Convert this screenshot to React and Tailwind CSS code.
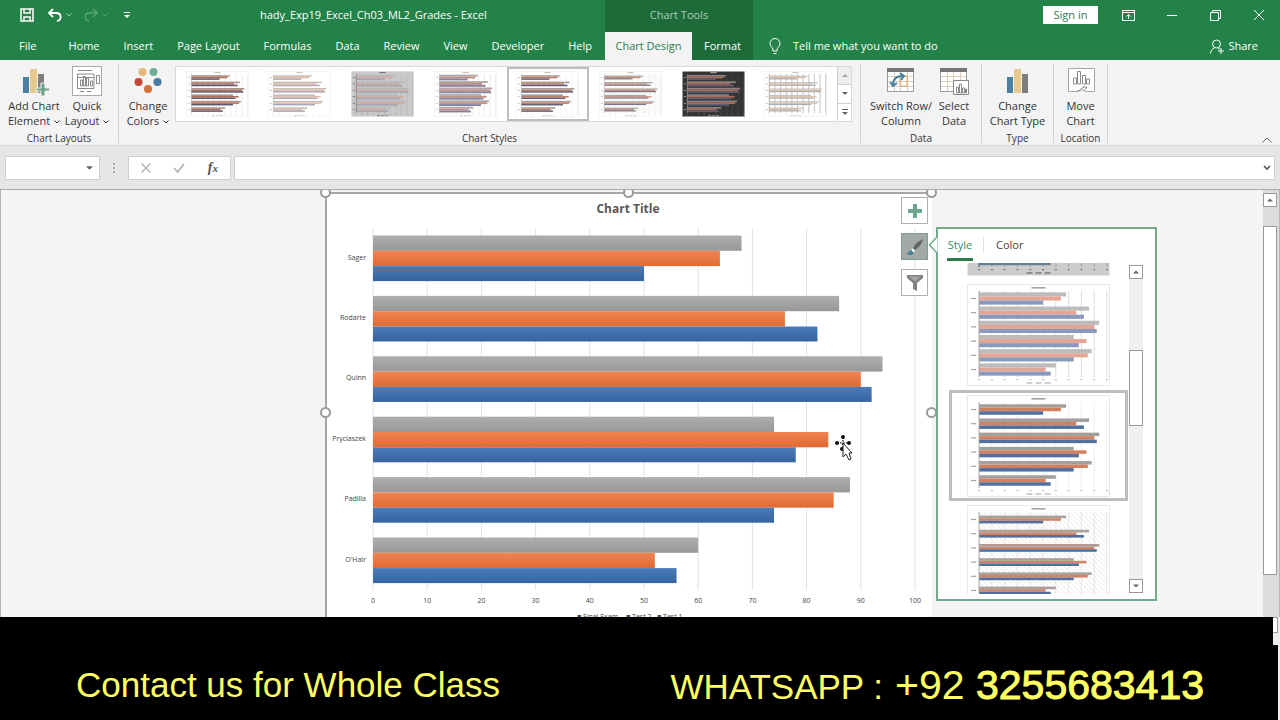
import React from "react";

const students = [
  { name: "Sager", gray: 68, orange: 64, blue: 50 },
  { name: "Rodarte", gray: 86, orange: 76, blue: 82 },
  { name: "Quinn", gray: 94, orange: 90, blue: 92 },
  { name: "Pryciaszek", gray: 74, orange: 84, blue: 78 },
  { name: "Padilla", gray: 88, orange: 85, blue: 74 },
  { name: "O'Hair", gray: 60, orange: 52, blue: 56 },
];

const ticks = [0, 10, 20, 30, 40, 50, 60, 70, 80, 90, 100];

const tabs = ["Home", "Insert", "Page Layout", "Formulas", "Data", "Review", "View", "Developer", "Help"];

const galleryStyles = [
  { id: 1, bar: 3.4, colors: ["#a98f86", "#b5705a", "#5f5a72"], grid: "#c9c9c9" },
  { id: 2, bar: 3.4, colors: ["#c5bcb6", "#e3bda4", "#a9a9b8"], grid: "none" },
  { id: 3, bar: 3.8, colors: ["#b9b9b9", "#d3aa9e", "#a3a8b3"], grid: "#a5a5a5", bg: "#c9c9c9", axis: "#444" },
  { id: 4, bar: 4.2, colors: ["#b0a8a8", "#c58f83", "#7f83a0"], grid: "#c4c4c4" },
  { id: 5, bar: 3.4, colors: ["#a39a98", "#c67b62", "#5d617d"], grid: "#dedede" },
  { id: 6, bar: 2.8, colors: ["#a8a3a1", "#cd8b74", "#75778c"], grid: "#dcdcdc", hatch: true },
  { id: 7, bar: 3.8, colors: ["#8d8585", "#b06a55", "#5c6079"], grid: "#5a5a5a", bg: "#333333", axis: "#ddd" },
  { id: 8, bar: 2.8, colors: ["#c9c4bd", "#e5bfa0", "#a6adb5"], grid: "#b5b5b5", dense: true },
];

// Small preview of the bar chart, used in the ribbon gallery and in the style pane
function MiniChart({ look, className }) {
  const hatchId = "hatch-" + look.id;
  const ink = look.axis || "#a3a3a3";
  return (
    <svg viewBox="0 0 142 102" preserveAspectRatio="none" className={className} aria-hidden="true">
      <defs>
        <pattern id={hatchId} width="5" height="5" patternUnits="userSpaceOnUse">
          <path d="M0 0L5 5" stroke="#dadada" strokeWidth="0.6" />
        </pattern>
      </defs>
      <rect x="0.5" y="0.5" width="141" height="101" fill={look.bg || "#ffffff"} stroke="#e8e8e8" />
      {look.hatch && <rect x="12" y="7" width="127" height="86" fill={`url(#${hatchId})`} />}
      <rect x="64" y="3" width="14" height="1.6" fill={ink} />
      {ticks.map((t) => (
        <g key={t}>
          <path d={`M${12 + t * 1.27} 7V93`} stroke={look.grid} strokeWidth="0.8" />
          <rect x={11 + t * 1.27} y="95" width="2" height="1.2" fill={ink} opacity="0.7" />
        </g>
      ))}
      {students.map((s, i) => {
        const top = 14.5 + i * 14.2 - look.bar * 1.5;
        return (
          <g key={s.name}>
            <rect x="4" y={top + look.bar * 1.5 - 0.6} width="5" height="1.2" fill={ink} />
            <rect x="12" y={top} width={s.gray * 1.27} height={look.bar} fill={look.colors[0]} />
            <rect x="12" y={top + look.bar} width={s.orange * 1.27} height={look.bar} fill={look.colors[1]} />
            <rect x="12" y={top + look.bar * 2} width={s.blue * 1.27} height={look.bar} fill={look.colors[2]} />
          </g>
        );
      })}
      {look.dense &&
        ticks.map((t) => <path key={t} d={`M${12 + t * 1.27} 7V93`} stroke={look.grid} strokeWidth="1.2" />)}
      <path d="M12 7V93" stroke={ink} strokeWidth="0.8" />
      <path d="M59 99H85" stroke={ink} strokeWidth="1.2" strokeDasharray="6 3" />
    </svg>
  );
}

function GradesChart() {
  return (
    <svg viewBox="0 0 605 440" className="block h-[440px] w-[605px] bg-white" fontFamily="'Open Sans', sans-serif">
      <defs>
        <linearGradient id="gray" x2="0" y2="1">
          <stop stopColor="#aeaeae" />
          <stop offset="1" stopColor="#989898" />
        </linearGradient>
        <linearGradient id="orange" x2="0" y2="1">
          <stop stopColor="#f08456" />
          <stop offset="1" stopColor="#e06a30" />
        </linearGradient>
        <linearGradient id="blue" x2="0" y2="1">
          <stop stopColor="#4b7cb9" />
          <stop offset="1" stopColor="#35639f" />
        </linearGradient>
      </defs>
      <text x="301" y="19" textAnchor="middle" fontSize="12" fontWeight="700" fill="#595959">Chart Title</text>
      {ticks.map((t) => (
        <g key={t}>
          <path d={`M${46 + t * 5.42} 34V396`} stroke="#e3e3e3" />
          <text x={46 + t * 5.42} y="409" textAnchor="middle" fontSize="7" fill="#444">{t}</text>
        </g>
      ))}
      {students.map((s, i) => {
        const top = 41.5 + i * 60.4;
        return (
          <g key={s.name}>
            <text x="39" y={top + 24} textAnchor="end" fontSize="7" fill="#444">{s.name}</text>
            <rect x="46" y={top} width={s.gray * 5.42} height="15.3" fill="url(#gray)" />
            <rect x="46" y={top + 15.3} width={s.orange * 5.42} height="15.3" fill="url(#orange)" />
            <rect x="46" y={top + 30.6} width={s.blue * 5.42} height="15" fill="url(#blue)" />
          </g>
        );
      })}
      <g fontSize="7" fill="#444">
        <text x="250" y="425">■ Final Exam</text>
        <text x="299" y="425">■ Test 2</text>
        <text x="330" y="425">■ Test 1</text>
      </g>
    </svg>
  );
}

function BarsIcon({ plus }) {
  return (
    <svg viewBox="0 0 30 30" className="h-[30px] w-[30px]" aria-hidden="true">
      <path d="M4 11h6v16H4z" fill="#4a7f9f" />
      <path d="M11 3h7v24h-7z" fill="#e6ca8c" />
      <path d="M19 8h6v19h-6z" fill="#7d7d7d" />
      {plus && <path d="M22 17h4v5h5v3h-5v5h-4v-5h-5v-3h5z" fill="#6aa58b" stroke="#f3f3f3" />}
    </svg>
  );
}

function QuickLayoutIcon() {
  return (
    <svg viewBox="0 0 30 30" className="h-[30px] w-[30px]" fill="none" stroke="#8a8a8a" aria-hidden="true">
      <rect x="0.5" y="0.5" width="29" height="29" fill="#fff" stroke="#a9a9a9" />
      <path d="M6 4.500h14M5.500 8v14.500H22V8zM24.500 9.500h3v8h-3z" />
      <path d="M8.500 20v-6h2v6zM11.500 20V10.500h2V20zM14.500 20v-8h2v8zM18.500 20v-5h2v5zM6 11.500h16M8 25.500h4M15 25.500h4" />
    </svg>
  );
}

function ColorsIcon() {
  return (
    <svg viewBox="0 0 30 30" className="h-[30px] w-[30px]" aria-hidden="true">
      <circle cx="9.500" cy="6" r="4" fill="#e3b77d" />
      <circle cx="20.500" cy="6" r="4" fill="#6fae92" />
      <circle cx="5.500" cy="16" r="4" fill="#c4473a" />
      <circle cx="24.500" cy="16" r="4" fill="#487aa5" />
      <circle cx="15" cy="23" r="4" fill="#d3703a" />
    </svg>
  );
}

function TableIcon({ chart }) {
  return (
    <svg viewBox="0 0 30 30" className="h-[30px] w-[30px]" fill="none" aria-hidden="true">
      <path d="M1.500 3.500h26v22h-26z" fill="#fff" stroke="#9a9a9a" />
      <path d="M1 2h27v4H1z" fill="#757575" />
      <path d="M2 10.500h25M2 15.500h25M2 20.500h25M8.500 6v19M14.500 6v19M21.500 6v19" stroke="#dccdb8" />
      {chart ? (
        <g stroke="#8a8a8a">
          <path d="M14.500 14.500h15v14h-15z" fill="#fff" />
          <path d="M17.500 27v-6h2v6zM20.500 27v-9h2v9zM23.500 27v-5h2v5zM26.500 27v-4h1v4z" />
        </g>
      ) : (
        <g>
          <path d="M14 10h7v10h-7z" stroke="#e2a25c" />
          <path d="M7 19c0-6 3-9 10-9M4 16l3 4 4-3M14 7l4 3-3 4" stroke="#3f7fa5" strokeWidth="1.800" />
        </g>
      )}
    </svg>
  );
}

function MoveChartIcon() {
  return (
    <svg viewBox="0 0 30 30" className="h-[30px] w-[30px]" fill="#fff" stroke="#8a8a8a" aria-hidden="true">
      <path d="M2.500 2.500h26v23h-9l-3-2-5 2h-9z" stroke="#a5a5a5" />
      <path d="M7.500 18v-6h3v6zM11.500 18V5.500h3V18zM16.500 18V9.500h3V18zM20.500 18v-5h3v5z" />
      <path d="M11 25c3 0 4-3 7-4M17 21h4l-3 4" fill="none" />
    </svg>
  );
}

function Chevron() {
  return (
    <svg viewBox="0 0 6 4" className="ml-1 inline-block h-1 w-1.5" fill="none" stroke="currentColor" aria-hidden="true">
      <path d="M0.500 0.500L3 3L5.500 0.500" />
    </svg>
  );
}

function Arrow({ up, className }) {
  return (
    <svg viewBox="0 0 8 4" className={className || "h-1 w-2"} fill="#666" aria-hidden="true">
      {up ? <path d="M0 4h8L4 0z" /> : <path d="M0 0h8L4 4z" />}
    </svg>
  );
}

function RibbonButton({ icon, lines, menu, className }) {
  return (
    <button className={"flex flex-col items-center text-[11px] leading-[15px] text-[#333] " + className}>
      {icon}
      <span className="mt-0.5 whitespace-nowrap">
        {lines[0]}
        <br />
        {lines[1]}
        {menu && <Chevron />}
      </span>
    </button>
  );
}

function RibbonGroup({ label, className, children }) {
  return (
    <section className={"mb-0.5 mt-1 flex flex-col justify-between border-r border-[#cfcfcf] pt-0.5 " + className}>
      <div className="flex">{children}</div>
      <h2 className="text-center text-[10px] leading-[10px] text-[#333]">{label}</h2>
    </section>
  );
}

function Header() {
  return (
    <header className="flex h-[60px] bg-[#238247] text-[11px] text-white">
      <div className="flex w-[605px] shrink-0 flex-col">
        <div className="flex h-[30px] items-center">
          <div className="flex w-[240px] items-center pl-5">
            <button aria-label="Save">
              <svg viewBox="0 0 14 14" className="h-3.5 w-3.5" fill="none" stroke="white" strokeWidth="1.500">
                <path d="M1 1h12v12H1zM4 1v4h6V1M4 13V9h6v4" />
              </svg>
            </button>
            <button aria-label="Undo" className="ml-3.5">
              <svg viewBox="0 0 14 14" className="h-3.5 w-3.5" fill="none" stroke="white" strokeWidth="1.800">
                <path d="M5 1L1 5l4 4M1 5h7c6 0 6 7 1 8" />
              </svg>
            </button>
            <span className="flex opacity-60">
              <Chevron />
            </span>
            <button aria-label="Redo" className="ml-3 flex items-center opacity-25">
              <svg viewBox="0 0 14 14" className="h-3.5 w-3.5" fill="none" stroke="white" strokeWidth="1.600">
                <path d="M9 1l4 4-4 4M13 5H6c-6 0-6 7-1 8" />
              </svg>
              <Chevron />
            </button>
            <button aria-label="Customize toolbar" className="ml-4">
              <svg viewBox="0 0 6 6" className="h-1.5 w-1.5" fill="white">
                <path d="M0 0h6v1H0zM0 3h6L3 6z" />
              </svg>
            </button>
          </div>
          <h1 className="ml-5 whitespace-pre">hady_Exp19_Excel_Ch03_ML2_Grades - Excel</h1>
        </div>
        <nav className="flex h-[30px] items-center gap-6 whitespace-nowrap pl-[19px] pt-0.5">
          <button className="mr-2">File</button>
          {tabs.map((tab) => (
            <button key={tab}>{tab}</button>
          ))}
        </nav>
      </div>
      <div className="flex w-[148px] shrink-0 flex-col bg-[#1e6b3a]">
        <div className="flex h-8 items-center justify-center pb-0.5 text-[#a9cdb5]">Chart Tools</div>
        <div className="flex h-7">
          <button className="w-[87px] bg-[#f3f3f3] text-[#2d7a4b]">Chart Design</button>
          <button className="flex-1">Format</button>
        </div>
      </div>
      <div className="flex flex-1 flex-col">
        <div className="flex h-[30px] items-center justify-end pr-4">
          <button className="h-[18px] w-[55px] bg-white leading-[18px] text-[#2d7a4b]">Sign in</button>
          <button aria-label="Ribbon display options" className="ml-6">
            <svg viewBox="0 0 13 11" className="h-[11px] w-[13px]" fill="none" stroke="white">
              <path d="M0.500 0.500h12v10H0.500zM0 2.500h13M6.500 9V4.500M4.500 6.500l2-2 2 2" />
            </svg>
          </button>
          <button aria-label="Minimize" className="ml-8">
            <svg viewBox="0 0 10 10" className="h-2.5 w-2.5" stroke="white">
              <path d="M0 5.500h10" />
            </svg>
          </button>
          <button aria-label="Restore" className="ml-[33px]">
            <svg viewBox="0 0 11 11" className="h-[11px] w-[11px]" fill="none" stroke="white">
              <path d="M0.500 2.500h8v8h-8zM2.500 2.500v-2h8v8h-2" />
            </svg>
          </button>
          <button aria-label="Close" className="ml-[33px]">
            <svg viewBox="0 0 10 10" className="h-2.5 w-2.5" stroke="white">
              <path d="M0 0l10 10M10 0L0 10" />
            </svg>
          </button>
        </div>
        <div className="flex h-[30px] items-center pl-4 pr-[22px] pt-0.5">
          <svg viewBox="0 0 12 17" className="h-[17px] w-3" fill="none" stroke="white" aria-hidden="true">
            <path d="M4 13v-2C3 9 1 8 1 5.500a5 5 0 0110 0C11 8 9 9 8 11v2zM4.500 15.500h3" />
          </svg>
          <button className="ml-3">Tell me what you want to do</button>
          <button className="ml-auto flex items-center gap-1">
            <svg viewBox="0 0 14 15" className="h-[15px] w-3.5" fill="none" stroke="white" aria-hidden="true">
              <circle cx="6.500" cy="5" r="4" />
              <path d="M0.500 14.500c0-3 2-5 4-5.500M8 9l2 1.500M11 9v6M8 12h6" />
            </svg>
            Share
          </button>
        </div>
      </div>
    </header>
  );
}

function Ribbon() {
  return (
    <div className="flex h-[86px] border-b border-[#d6d6d6] bg-[#f3f3f3]">
      <RibbonGroup label="Chart Layouts" className="w-[119px]">
        <RibbonButton icon={<BarsIcon plus />} lines={["Add Chart", "Element"]} menu className="w-[68px]" />
        <RibbonButton icon={<QuickLayoutIcon />} lines={["Quick", "Layout"]} menu className="w-[38px]" />
      </RibbonGroup>
      <RibbonGroup label="Chart Styles" className="w-[742px]">
        <RibbonButton icon={<ColorsIcon />} lines={["Change", "Colors"]} menu className="ml-0.5 w-[54px]" />
        <div className="flex h-[56px] w-[677px] border border-[#d9d9d9] bg-white">
          <div className="grid flex-1 grid-cols-8">
            {galleryStyles.map((look) => (
              <button
                key={look.id}
                aria-label={"Style " + look.id}
                className={
                  "flex items-center justify-center border-2 " + (look.id === 5 ? "border-[#bdbdbd]" : "border-transparent")
                }
              >
                <MiniChart look={look} className="h-[46px] w-[63px]" />
              </button>
            ))}
          </div>
          <div className="flex w-[14px] flex-col border-l border-[#d0d0d0]">
            <button aria-label="Scroll up" className="flex flex-1 items-center justify-center bg-[#e2e2e2] opacity-60">
              <Arrow up className="h-[3px] w-1.5" />
            </button>
            <button aria-label="Scroll down" className="flex flex-1 items-center justify-center border-y border-[#d0d0d0]">
              <Arrow className="h-[3px] w-1.5" />
            </button>
            <button aria-label="More styles" className="flex flex-1 flex-col items-center justify-center gap-0.5">
              <span className="h-px w-1.5 bg-[#666]" />
              <Arrow className="h-[3px] w-1.5" />
            </button>
          </div>
        </div>
      </RibbonGroup>
      <RibbonGroup label="Data" className="w-[121px]">
        <RibbonButton icon={<TableIcon />} lines={["Switch Row/", "Column"]} className="ml-1.5 w-[68px]" />
        <RibbonButton icon={<TableIcon chart />} lines={["Select", "Data"]} className="w-[38px]" />
      </RibbonGroup>
      <RibbonGroup label="Type" className="w-[72px]">
        <RibbonButton icon={<BarsIcon />} lines={["Change", "Chart Type"]} className="w-full" />
      </RibbonGroup>
      <RibbonGroup label="Location" className="w-[54px]">
        <RibbonButton icon={<MoveChartIcon />} lines={["Move", "Chart"]} className="w-full" />
      </RibbonGroup>
      <button aria-label="Collapse the ribbon" className="mb-0.5 ml-auto mr-2 self-end">
        <svg viewBox="0 0 10 6" className="h-1.5 w-2.5" fill="none" stroke="#666">
          <path d="M0.500 5.500L5 1l4.500 4.500" />
        </svg>
      </button>
    </div>
  );
}

function FormulaBar() {
  return (
    <div className="flex h-11 items-center border-b border-[#ababab] bg-[#e6e6e6] pl-[5px] pr-[5px]">
      <div className="flex h-6 w-[95px] items-center border border-[#cfcfcf] bg-white pr-1.5">
        <input aria-label="Name box" className="w-full min-w-0 flex-1 bg-transparent outline-none" />
        <Arrow className="h-1 w-[7px]" />
      </div>
      <svg viewBox="0 0 2 10" className="mx-[13px] h-2.5 w-0.5" fill="#aaa" aria-hidden="true">
        <path d="M0 0h2v2H0zM0 4h2v2H0zM0 8h2v2H0z" />
      </svg>
      <div className="flex h-6 w-[103px] items-center justify-between border border-[#cfcfcf] bg-white px-3">
        <button aria-label="Cancel">
          <svg viewBox="0 0 10 10" className="h-2.5 w-2.5" stroke="#b5b5b5" strokeWidth="1.500">
            <path d="M0.500 0.500l9 9M9.500 0.500l-9 9" />
          </svg>
        </button>
        <button aria-label="Enter">
          <svg viewBox="0 0 12 10" className="h-2.5 w-3" fill="none" stroke="#b5b5b5" strokeWidth="1.800">
            <path d="M1 5l3.500 4L11 1" />
          </svg>
        </button>
        <button className="font-['Liberation_Serif',serif] text-[14px] font-bold italic leading-none text-[#555]">
          f<span className="text-[11px]">x</span>
        </button>
      </div>
      <div className="ml-[3px] flex h-6 flex-1 items-center border border-[#cfcfcf] bg-white pr-[3px]">
        <input aria-label="Formula bar" className="w-full flex-1 bg-transparent outline-none" />
        <svg viewBox="0 0 8 6" className="h-1.5 w-2" fill="none" stroke="#555" strokeWidth="1.600" aria-hidden="true">
          <path d="M1 1l3 3 3-3" />
        </svg>
      </div>
    </div>
  );
}

function Handle({ className }) {
  return <span className={"absolute h-[11px] w-[11px] rounded-full border-2 border-[#9a9a9a] bg-white " + className} />;
}

function StylePane() {
  const grayStyle = { id: "p3", bar: 3.8, colors: ["#b9b9b9", "#dba99a", "#5d7f97"], grid: "#9c9c9c", bg: "#cccccc", axis: "#555" };
  const softStyle = { id: "p4", bar: 4.1, colors: ["#bcbcbc", "#e5a594", "#8b99bd"], grid: "#d5d5d5" };
  const boldStyle = { id: "p5", bar: 3.5, colors: ["#a2a09c", "#d5805c", "#516f9f"], grid: "#e9e9e9" };
  const hatchStyle = { id: "p6", bar: 2.6, colors: ["#aaa09b", "#cf8468", "#526f9b"], grid: "#e4dede", hatch: true };
  return (
    <aside className="absolute left-[609px] top-[33px] flex h-[374px] w-[221px] flex-col border-2 border-[#72ab8a] bg-white">
      <svg viewBox="0 0 9 18" className="absolute -left-[10px] top-[7px] h-[18px] w-[10px]" fill="white" aria-hidden="true">
        <path d="M9 0.500L1 9l8 8.500" stroke="#72ab8a" strokeWidth="1.500" />
      </svg>
      <div className="flex h-8 pl-[9px] text-[11px]">
        <button className="flex w-[26px] justify-center whitespace-nowrap border-b-[3px] border-[#2d7a4b] pt-2 text-[#3a8a5c]">
          Style
        </button>
        <span className="ml-2.5 mr-3 mt-2 h-4 w-px bg-[#e0e0e0]" />
        <button className="flex pt-2 text-[#444]">Color</button>
      </div>
      <div className="flex h-[336px] justify-between overflow-hidden pl-[11px] pr-3 pt-0.5">
        <div className="flex h-[331px] w-[179px] flex-col items-center overflow-hidden">
          <div className="flex h-[13px] shrink-0 items-end overflow-hidden">
            <MiniChart look={grayStyle} className="h-[102px] w-[143px] shrink-0" />
          </div>
          <MiniChart look={softStyle} className="mt-2 h-[102px] w-[143px] shrink-0" />
          <button aria-label="Style 5" className="mt-1 flex h-[111px] w-full shrink-0 items-center justify-center border-[3px] border-[#bdbdbd]">
            <MiniChart look={boldStyle} className="h-[102px] w-[143px]" />
          </button>
          <MiniChart look={hatchStyle} className="mt-1 h-[102px] w-[143px] shrink-0" />
        </div>
        <div className="mb-1 mt-0.5 flex w-[14px] flex-col bg-[#f0f0f0]">
          <button aria-label="Scroll styles up" className="flex h-3.5 items-center justify-center border border-[#999] bg-white">
            <Arrow up className="h-1 w-1.5" />
          </button>
          <span className="mt-[71px] h-[76px] border border-[#999] bg-white" />
          <button aria-label="Scroll styles down" className="mt-auto flex h-3.5 items-center justify-center border border-[#999] bg-white">
            <Arrow className="h-1 w-1.5" />
          </button>
        </div>
      </div>
    </aside>
  );
}

function Worksheet() {
  return (
    <main className="flex h-[427px] overflow-hidden border-x border-[#b5b5b5] bg-[#f4f4f4] pl-[324px]">
      <div className="relative mt-0.5 w-[607px] shrink-0 border-x-2 border-t-2 border-[#a6a6a6]">
        <GradesChart />
        <Handle className="-left-[7px] -top-[7px]" />
        <Handle className="-top-[7px] left-[296px]" />
        <Handle className="-right-[7px] -top-[7px]" />
        <Handle className="-left-[7px] top-[213px]" />
        <Handle className="-right-[7px] top-[213px]" />
        <div className="absolute right-0.5 top-[3px] flex flex-col gap-[9px]">
          <button aria-label="Chart elements" className="flex h-[27px] w-[27px] items-center justify-center border border-[#b0b0b0] bg-white">
            <svg viewBox="0 0 14 14" className="h-3.5 w-3.5" fill="#6aa88e">
              <path d="M5 0h4v5h5v4H9v5H5V9H0V5h5z" />
            </svg>
          </button>
          <button aria-label="Chart styles" className="flex h-[27px] w-[27px] items-center justify-center border border-[#7e9e8d] bg-[#a3aaa5]">
            <svg viewBox="0 0 18 18" className="h-[18px] w-[18px]">
              <path d="M17 1C12 3 9 6 7 10l2 2c4-3 7-6 8-11z" fill="#666" />
              <path d="M6.500 10.500l2.500 2.500-1.500 1.500-2.500-2z" fill="#fff" />
              <path d="M5 12c-2 0-2 3-4.500 3.500C3 18 8 17 7.500 14.500z" fill="#3f7d9e" />
            </svg>
          </button>
          <button aria-label="Chart filters" className="flex h-[27px] w-[27px] items-center justify-center border border-[#b0b0b0] bg-white">
            <svg viewBox="0 0 16 16" className="h-4 w-4" fill="#808080">
              <path d="M0 0h16v3l-6 5v8l-4-2V8L0 3z" />
              <path d="M2 1.500h12l-6 5z" fill="#a5a5a5" />
            </svg>
          </button>
        </div>
        <svg viewBox="0 0 18 27" className="absolute left-[508px] top-[240px] h-[27px] w-[18px]" aria-hidden="true">
          <path d="M8 3v12M2 9h12" stroke="#111" strokeDasharray="2 1" />
          <circle cx="8" cy="3" r="2" fill="#111" />
          <circle cx="2" cy="9" r="2" fill="#111" />
          <circle cx="14" cy="9" r="2" fill="#111" />
          <circle cx="7" cy="15" r="2" fill="#111" />
          <path d="M8 9v14l3-3 3 6 2-1-2-6h3z" fill="#fff" stroke="#222" />
        </svg>
        <StylePane />
      </div>
      <div className="ml-auto flex w-4 flex-col bg-[#dcdcdc] pr-0.5 pt-[3px]">
        <button aria-label="Scroll up" className="flex h-3.5 items-center justify-center border border-[#999] bg-white">
          <Arrow up className="h-1 w-1.5" />
        </button>
        <span className="mt-[19px] h-[349px] border border-[#999] bg-white" />
      </div>
    </main>
  );
}

function ContactBanner() {
  return (
    <footer className="flex flex-1 flex-col bg-[#eeeeee] font-['Liberation_Sans',Arial,sans-serif] text-[35px] leading-[40px] text-[#ffff63]">
      <div className="flex h-7">
        <div className="flex-1 bg-black" />
        <div className="mr-0.5 h-4 w-[5px] border border-l-0 border-[#999] bg-white" />
      </div>
      <div className="mr-0.5 flex flex-1 items-start justify-between bg-black pb-[15px] pl-[76px] pr-[74px] pt-5">
        <p>Contact us for Whole Class</p>
        <p className="flex items-baseline gap-3">
          WHATSAPP :
          <span className="text-[41px]">
            +92 <span className="[-webkit-text-stroke:1px_#ffff63]">3255683413</span>
          </span>
        </p>
      </div>
    </footer>
  );
}

export default function App() {
  return (
    <div className="flex min-h-screen flex-col bg-[#f3f3f3] font-['Open_Sans','Noto_Sans',sans-serif]">
      <Header />
      <Ribbon />
      <FormulaBar />
      <Worksheet />
      <ContactBanner />
    </div>
  );
}
